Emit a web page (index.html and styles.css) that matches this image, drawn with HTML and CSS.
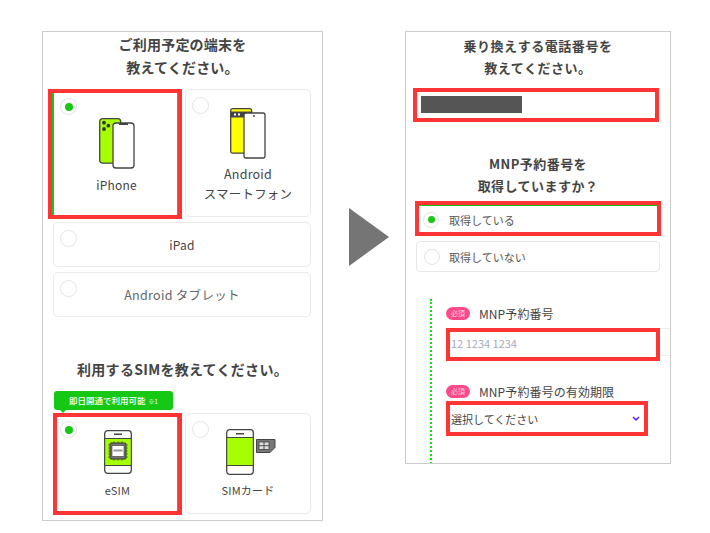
FILE: index.html
```html
<!DOCTYPE html>
<html lang="ja">
<head>
<meta charset="utf-8">
<title>SIM申込み</title>
<link rel="stylesheet" href="styles.css">
</head>
<body>
<main class="stage">
  <section class="panel panel-left">
    <h2 class="title title-device">ご利用予定の端末を<br>教えてください。</h2>
    <div class="row row-tall">
      <div class="card picked picked-iphone">
        <span class="radio on"></span>
        <svg class="icon" width="36" height="51" viewBox="0 0 36 51">
          <rect x=".7" y=".7" width="21" height="44.500" rx="3" fill="#a6ff00" stroke="#444" stroke-width="1.300"/>
          <circle cx="5" cy="4.700" r="1.900" fill="#333"/><circle cx="5" cy="11" r="1.900" fill="#333"/><circle cx="9.300" cy="7.700" r="1.900" fill="#333"/>
          <rect x="14" y="5" width="21" height="45" rx="3" fill="#fff" stroke="#444" stroke-width="1.300"/>
          <rect x="20" y="5" width="9" height="2" fill="#444"/>
        </svg>
        <span class="label">iPhone</span>
      </div>
      <div class="card card-android">
        <span class="radio"></span>
        <svg class="icon" width="36" height="51" viewBox="0 0 36 51">
          <rect x=".7" y=".7" width="21" height="44.500" rx="2" fill="#ff0" stroke="#444" stroke-width="1.300"/>
          <rect x=".7" y="3.500" width="21" height="6" fill="#444"/>
          <rect x="4" y="5.500" width="2" height="2" fill="#fff"/><rect x="8" y="5.500" width="2" height="2" fill="#fff"/>
          <rect x="14" y="5" width="21" height="45" rx="2" fill="#fff" stroke="#444" stroke-width="1.300"/>
          <circle cx="24" cy="8" r="1" fill="#444"/>
        </svg>
        <span class="label label-android">Android<br>スマートフォン</span>
      </div>
    </div>
    <div class="card card-wide"><span class="radio"></span><span class="label">iPad</span></div>
    <div class="card card-wide card-tablet"><span class="radio"></span><span class="label label-muted">Android タブレット</span></div>

    <h2 class="title title-sim">利用するSIMを教えてください。</h2>
    <div class="tip">即日開通で利用可能<small>※1</small></div>
    <div class="row row-sim">
      <div class="card picked picked-esim">
        <span class="radio on"></span>
        <svg class="icon" width="28" height="44" viewBox="0 0 28 44">
          <rect x=".7" y=".7" width="26.600" height="42.600" rx="3" fill="#fff" stroke="#444" stroke-width="1.300"/>
          <rect x=".7" y="8.500" width="26.600" height="27" fill="#a6ff00" stroke="#444" stroke-width="1"/>
          <rect x="10" y="3.500" width="8" height="1.500" fill="#444"/>
          <path d="M6 15h-2M6 18h-2M6 21h-2M6 24h-2M6 27h-2M22 15h2M22 18h2M22 21h2M22 24h2M22 27h2M10 13v-2M14 13v-2M18 13v-2M10 29v2M14 29v2M18 29v2" stroke="#555" stroke-width=".7"/>
          <rect x="6" y="13" width="16" height="16" rx="1" fill="#777" stroke="#333" stroke-width="1"/>
          <rect x="8" y="15.500" width="12" height="11" fill="#fff" stroke="#333" stroke-width=".6"/>
          <rect x="9.500" y="19.500" width="9" height="2" fill="#999"/>
        </svg>
        <span class="label">eSIM</span>
      </div>
      <div class="card card-simcard">
        <span class="radio"></span>
        <svg class="icon" width="50" height="46" viewBox="0 0 50 46">
          <rect x=".7" y=".7" width="26.600" height="44.600" rx="3" fill="#fff" stroke="#444" stroke-width="1.300"/>
          <rect x=".7" y="8.500" width="26.600" height="28" fill="#a6ff00" stroke="#444" stroke-width="1"/>
          <rect x="10" y="4" width="8" height="1.500" fill="#444"/>
          <path d="M30.500 10.500h18.500v8l-5 5h-13.500z" fill="#777" stroke="#444"/>
          <rect x="33" y="13" width="10" height="7.500" fill="#ddd" stroke="#333" stroke-width=".7"/>
          <path d="M38 13v7.500M38 16.700h5M33 16.700h5" stroke="#333" stroke-width=".8"/>
        </svg>
        <span class="label">SIMカード</span>
      </div>
    </div>
  </section>

  <div class="arrow"></div>

  <section class="panel panel-right">
    <h2 class="title title-number">乗り換えする電話番号を<br>教えてください。</h2>
    <div class="field field-phone"><span class="mask"></span></div>
    <h2 class="title title-mnp">MNP予約番号を<br>取得していますか？</h2>
    <div class="option option-on"><span class="dot on"></span>取得している</div>
    <div class="option"><span class="dot"></span>取得していない</div>
    <div class="mnp">
      <div class="mnp-head"><span class="must">必須</span>MNP予約番号</div>
      <div class="input-wrap"><div class="field field-input">12 1234 1234</div></div>
      <div class="mnp-head mnp-head-second"><span class="must">必須</span>MNP予約番号の有効期限</div>
      <div class="field field-select">選択してください
        <svg width="8" height="6" viewBox="0 0 8 6"><path d="M1 1l3 3 3-3" fill="none" stroke="#5a1eff" stroke-width="1.500"/></svg>
      </div>
    </div>
  </section>
</main>
</body>
</html>
```

FILE: styles.css
```css
* { box-sizing: border-box; }
html, body { margin: 0; background: #fff; }
body { font-family: "Noto Sans CJK JP", "Noto Sans", sans-serif; color: #444; }
.stage { display: flex; align-items: flex-start; width: 710px; height: 533px; padding: 31px 0 0 42px; overflow: hidden; }
.panel { border: 1px solid #ccc; flex: none; }
.panel-left { width: 281px; height: 490px; padding: 0 10px; }
.panel-right { width: 266px; height: 433px; padding: 0 10px; overflow: hidden; }
.title { margin: 0; font-size: 14px; line-height: 23px; font-weight: 700; color: #444; text-align: center; }
.title-device { padding-top: 1px; height: 57px; letter-spacing: .2px; }
.title-sim { margin: 40px -4px 0; height: 34px; line-height: 24px; letter-spacing: .3px; white-space: nowrap; }
.title-number { padding-top: 3px; height: 56px; font-size: 13px; letter-spacing: .55px; line-height: 22px; }
.title-mnp { margin-top: 31px; height: 48px; font-size: 13px; letter-spacing: .45px; line-height: 22px; }

.row { display: flex; gap: 3px; }
.row-tall { height: 129px; }
.row-sim { height: 102px; margin-top: 3px; }
.card { position: relative; display: flex; flex-direction: column; align-items: center; background: #fff; border: 1px solid #ebebeb; border-radius: 5px; flex: none; }
.radio { position: absolute; left: 6px; top: 7px; width: 17px; height: 17px; border: 1px solid #e4e4e4; border-radius: 50%; background: #fff; display: flex; align-items: center; justify-content: center; }
.radio.on::after { content: ""; width: 8px; height: 8px; border-radius: 50%; background: #14c814; }
.picked { border: 4px solid #ff3535; border-radius: 0; }
.picked-iphone { width: 134px; margin-left: -5px; height: 130px; padding: 25px 0 0 3px; box-shadow: inset 2px 0 0 #14c814, inset -1px 0 0 #9a8a20; }
.picked-iphone .radio { left: 8px; top: 5px; }
.picked-esim { width: 129px; height: 102px; padding-top: 13px; box-shadow: inset -1px 0 0 #9a8a20; }
.picked-esim .radio { left: 3px; top: 4px; }
.card-android { width: 126px; height: 128px; padding-top: 18px; }
.card-simcard { width: 126px; height: 101px; padding: 15px 0 0 6px; }
.card-simcard .radio { left: 6px; top: 7px; }
.card-wide { width: 258px; height: 45px; margin-top: 4px; justify-content: center; }
.card-tablet { margin-top: 5px; }
.icon { display: block; flex: none; }
.label { font-size: 12px; line-height: 19px; text-align: center; color: #444; margin-top: 6px; letter-spacing: .2px; }
.picked-esim .label { margin-top: 7px; font-size: 11px; }
.card-simcard .label { margin: 6px 0 0 -6px; font-size: 11px; }
.card-wide .label { margin-top: 0; }
.label-muted { color: #666; font-size: 12.500px; letter-spacing: .3px; }
.label-android { margin-top: 5px; line-height: 20px; font-size: 12.500px; }
.tip { position: relative; width: 119px; height: 19px; margin-left: 1px; background: #14c814; border-radius: 3px; color: #fff; font-size: 8.500px; font-weight: 500; line-height: 19px; text-align: center; }
.tip small { font-size: 6px; margin-left: 3px; font-weight: 400; }
.tip::after { content: ""; position: absolute; left: 6px; bottom: -3px; border: 3px solid transparent; border-top-color: #14c814; border-bottom: 0; }

.arrow { flex: none; width: 40px; height: 58px; margin: 177px 16px 0 26px; background: #757575; clip-path: polygon(0 0, 100% 50%, 0 100%); }

.field { background: #fff; border: 4px solid #ff3535; flex: none; }
.field-phone { width: 246px; height: 34px; margin-left: -3px; padding: 4px; }
.mask { display: block; width: 101px; height: 17px; background: #555; }
.option { display: flex; align-items: center; width: 244px; height: 31px; margin-top: 5px; padding-left: 7px; border: 1px solid #e8e8e8; border-radius: 4px; font-size: 11px; color: #555; }
.option-on { width: 246px; height: 35px; margin-top: 0; margin-left: -1px; padding: 2px 0 0 4px; border: 4px solid #ff3535; border-radius: 0; box-shadow: inset 0 1px 0 #14c814; }
.dot { display: flex; align-items: center; justify-content: center; width: 16px; height: 16px; margin-right: 9px; border: 1px solid #e4e4e4; border-radius: 50%; }
.option-on .dot { margin-right: 10px; }
.dot.on::after { content: ""; width: 7px; height: 7px; border-radius: 50%; background: #14c814; }
.mnp { margin: 27px -10px 0 14px; padding: 6px 0 0 14px; border-left: 2px dotted #14e014; height: 200px; }
.mnp-head { display: flex; align-items: center; height: 16px; font-size: 12px; color: #444; letter-spacing: .1px; }
.mnp-head-second { margin-top: 27px; }
.must { width: 24px; height: 13px; margin-right: 9px; border-radius: 7px; background: #ff4a8a; color: #ffd0e0; font-size: 7px; line-height: 13px; text-align: center; letter-spacing: 0; }
.input-wrap { height: 28px; margin-top: 7px; border-top: 1px solid #eee; border-bottom: 1px solid #eee; }
.field-input { width: 214px; height: 33px; margin-top: -1px; padding-left: 1px; font-size: 11px; line-height: 22px; color: #a3abc0; }
.field-select { display: flex; align-items: center; justify-content: space-between; width: 202px; height: 35px; margin-top: 2px; padding: 0 4px 0 1px; font-size: 11px; color: #444; }
```
